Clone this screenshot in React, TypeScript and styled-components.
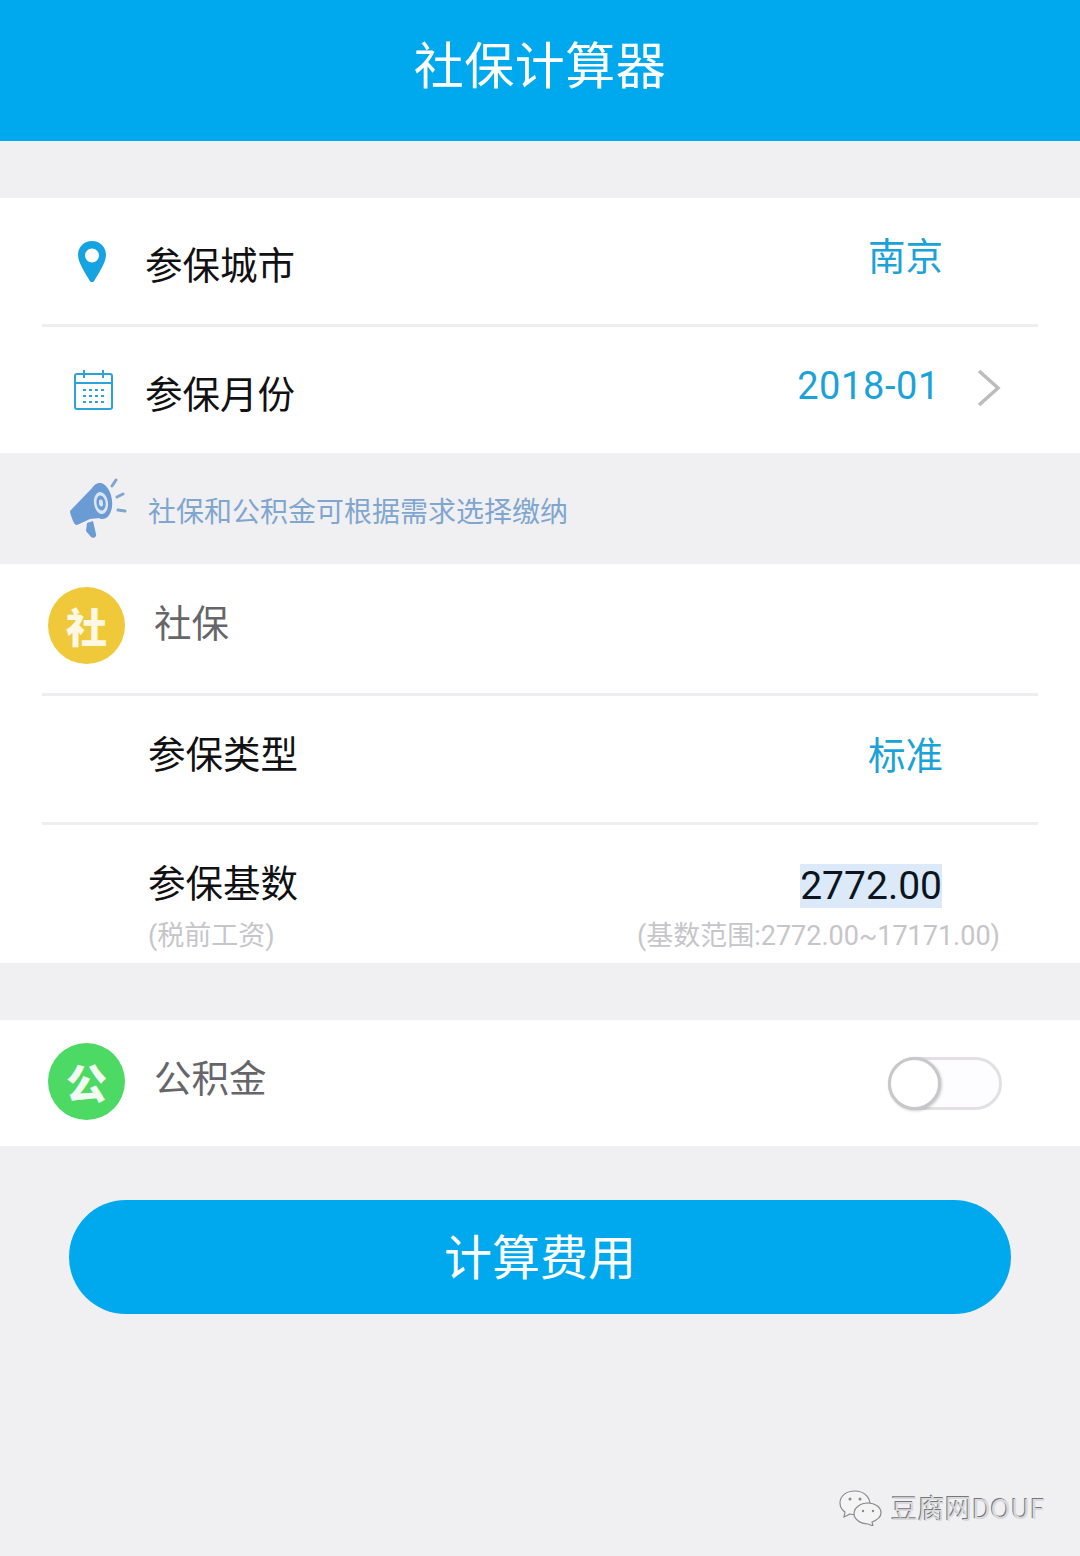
import styled, { createGlobalStyle } from 'styled-components';

const GlobalStyle = createGlobalStyle`
  html, body {
    margin: 0;
    padding: 0;
    background-color: #f0f0f2;
    font-family: 'Noto Sans CJK SC', 'Noto Sans', sans-serif;
  }
`;

const Page = styled.div`
  width: 1080px;
  height: 1556px;
  overflow: hidden;
  display: flex;
  flex-direction: column;
  background-color: #f0f0f2;
`;

const Header = styled.header`
  height: 141px;
  flex-shrink: 0;
  margin-bottom: 57px;
  display: flex;
  align-items: center;
  justify-content: center;
  background-color: #00a8ee;
  color: #ffffff;
  font-size: 50px;
  letter-spacing: 0.5px;
  padding-bottom: 17px;
  box-sizing: border-box;
`;

const Card = styled.section`
  background-color: #ffffff;
`;

const Row = styled.div<{ $height: number; $shift?: number }>`
  height: ${(props) => props.$height}px;
  margin: 0 42px;
  display: flex;
  align-items: center;
  box-sizing: border-box;
  padding-bottom: ${(props) => props.$shift ?? 0}px;
`;

const Divider = styled.div`
  height: 3px;
  margin: 0 42px;
  background-color: #eeeef0;
`;

const IconSlot = styled.div<{ $pad: number }>`
  width: 103px;
  flex-shrink: 0;
  display: flex;
  align-items: center;
  padding-left: ${(props) => props.$pad}px;
  box-sizing: border-box;
`;

const BadgeSlot = styled.div`
  width: 112px;
  flex-shrink: 0;
  padding-left: 6px;
  box-sizing: border-box;
`;

const Badge = styled.div<{ $color: string; $ink: string }>`
  width: 77px;
  height: 77px;
  border-radius: 50%;
  background-color: ${(props) => props.$color};
  color: ${(props) => props.$ink};
  font-size: 41px;
  font-weight: 900;
  line-height: 77px;
  text-align: center;
`;

const Label = styled.span<{ $indent?: number }>`
  font-size: 37.500px;
  line-height: 50px;
  color: #111114;
  margin-left: ${(props) => props.$indent ?? 0}px;
  padding-top: 4px;
`;

const GroupLabel = styled.span`
  font-size: 37.500px;
  line-height: 50px;
  color: #66666a;
  padding-bottom: 10px;
`;

// $nudge is a margin on a centred flex item, so the text moves by half of it
const Value = styled.span<{ $right: number; $nudge?: number }>`
  margin-left: auto;
  margin-right: ${(props) => props.$right}px;
  margin-top: ${(props) => props.$nudge ?? 0}px;
  font-size: 37.500px;
  line-height: 50px;
  color: #1ba2d8;
`;

const DateValue = styled(Value)`
  font-family: Roboto, sans-serif;
  font-size: 38px;
  letter-spacing: 0.6px;
`;

const Chevron = styled.svg`
  flex-shrink: 0;
  margin: -4px 37px 0 0;
  width: 24px;
  height: 38px;
`;

const Notice = styled.div`
  height: 111px;
  display: flex;
  align-items: center;
  padding-left: 69px;
  box-sizing: border-box;
`;

const NoticeText = styled.span`
  margin-left: 21px;
  padding-top: 2px;
  font-size: 28px;
  color: #7fa6cf;
`;

const BaseRow = styled.div`
  height: 138px;
  margin: 0 42px;
  padding: 27px 38px 0 106px;
  box-sizing: border-box;
  display: grid;
  grid-template-columns: 1fr auto;
  align-content: start;
  justify-items: start;
`;

const BaseValue = styled.span`
  justify-self: end;
  font-family: Roboto, sans-serif;
  font-size: 39px;
  line-height: 44px;
  margin-top: 12px;
  margin-right: 58px;
  color: #0c1420;
  background-color: #dbe9f8;
`;

const Hint = styled.span`
  font-family: Roboto, 'Noto Sans CJK SC', sans-serif;
  font-size: 27px;
  line-height: 40px;
  color: #c6c6ca;
  margin-top: 8px;
`;

const HintRight = styled(Hint)`
  justify-self: end;
`;

const SpacedCard = styled(Card)`
  margin-top: 57px;
`;

const Toggle = styled.div`
  margin: 4px 36px 0 auto;
  width: 114px;
  height: 53px;
  border-radius: 27px;
  border: 3px solid #e2e0e4;
  box-sizing: border-box;
  background-color: #fdfcfe;
  display: flex;
`;

const Knob = styled.div`
  margin: -3px;
  width: 53px;
  height: 53px;
  flex-shrink: 0;
  border-radius: 50%;
  box-sizing: border-box;
  border: 3px solid #c8c8ca;
  background-color: #ffffff;
  box-shadow: 1px 1px 3px rgba(0, 0, 0, 0.2);
`;

const SubmitButton = styled.button`
  display: block;
  flex-shrink: 0;
  width: 942px;
  height: 114px;
  margin: 54px auto 0;
  padding: 0 0 7px;
  border: none;
  border-radius: 57px;
  background-color: #00a8ee;
  color: #ffffff;
  font-family: inherit;
  font-size: 48px;
`;

const Watermark = styled.div`
  margin: auto 35px 28px 0;
  align-self: flex-end;
  display: flex;
  align-items: center;
  gap: 8px;
  font-size: 27px;
  line-height: 40px;
  color: #d9d9db;
  text-shadow: -1px -1px 0 #77777a;
`;

const PinIcon = () => (
  <svg width="28" height="41" viewBox="0 0 28 41">
    <path
      fillRule="evenodd"
      fill="#16a3e2"
      d="M14 0C6 0 0 6 0 14c0 8 8 19 11.500 25.500c1 2 4 2 5 0C20 33 28 22 28 14 28 6 22 0 14 0zm0 7.500a7 7 0 1 1 0 14 7 7 0 0 1 0-14z"
    />
  </svg>
);

const CalendarIcon = () => (
  <svg width="39" height="40" viewBox="0 0 39 40" fill="none" stroke="#2ba3d6" strokeWidth="2">
    <rect x="1" y="4" width="37" height="35" rx="2" />
    <path d="M1 13h37M10 0v8M29 0v8" />
    <path strokeWidth="2" strokeDasharray="3 3" d="M9 20h22M9 26h22M9 32h22" />
  </svg>
);

const HornIcon = () => (
  <svg width="58" height="62" viewBox="0 0 58 62">
    <path fill="#6b9bd4" d="M1 33L26 7c2-2 5-2 8-1l5 32c-2 2-5 3-8 2l-10 1-13 6c-2 0-3-2-4-4-1-3-3-7-3-10z" />
    <ellipse cx="32" cy="23" rx="11" ry="18" fill="#6b9bd4" transform="rotate(-8 32 23)" />
    <ellipse cx="32" cy="25" rx="7" ry="11" fill="#dbe5f1" transform="rotate(-8 32 25)" />
    <ellipse cx="32" cy="25" rx="4.500" ry="7.500" fill="#6b9bd4" transform="rotate(-8 32 25)" />
    <ellipse cx="32" cy="25" rx="2" ry="3.500" fill="#dbe5f1" transform="rotate(-8 32 25)" />
    <path fill="#6b9bd4" d="M18 45l6-2 3 13c1 3-3 5-5 3l-5-6z" />
    <path stroke="#7fa6cf" strokeWidth="3" strokeLinecap="round" fill="none" d="M43 8l4-6M48 19l6-3M49 32l7 1" />
  </svg>
);

const WeChatIcon = () => (
  <svg width="44" height="36" viewBox="0 0 44 36" fill="#f4f4f5" stroke="#8a8a8c" strokeWidth="1.200">
    <path d="M16 1C7 1 1 6 1 13c0 4 2 7 5 9l-1 5 6-3c2 .5 4 .7 6 .5C15 19 22 13 31 13 30 6 24 1 16 1z" />
    <path d="M29 13c-8 0-14 5-14 10.500S21 34 29 34l5 2-1-4c5-2 9-5 9-9 0-6-6-10-13-10z" />
    <circle cx="11" cy="9" r="1.500" fill="#8a8a8c" stroke="none" />
    <circle cx="21" cy="9" r="1.500" fill="#8a8a8c" stroke="none" />
    <circle cx="24" cy="21" r="1.200" fill="#8a8a8c" stroke="none" />
    <circle cx="34" cy="21" r="1.200" fill="#8a8a8c" stroke="none" />
  </svg>
);

const App = () => {
  return (
    <Page>
      <GlobalStyle />
      <Header>社保计算器</Header>

      <Card>
        <Row $height={126}>
          <IconSlot $pad={36}>
            <PinIcon />
          </IconSlot>
          <Label>参保城市</Label>
          <Value $right={95} $nudge={-14}>南京</Value>
        </Row>
        <Divider />
        <Row $height={126}>
          <IconSlot $pad={32}>
            <CalendarIcon />
          </IconSlot>
          <Label>参保月份</Label>
          <DateValue $right={37} $nudge={-8}>2018-01</DateValue>
          <Chevron viewBox="0 0 24 38" fill="none" stroke="#bcbcbe" strokeWidth="3.500">
            <path d="M2 2l19 17L2 36" />
          </Chevron>
        </Row>
      </Card>

      <Notice>
        <HornIcon />
        <NoticeText>社保和公积金可根据需求选择缴纳</NoticeText>
      </Notice>

      <Card>
        <Row $height={129} $shift={6}>
          <BadgeSlot>
            <Badge $color="#f0c93a" $ink="#fdf8e4">社</Badge>
          </BadgeSlot>
          <GroupLabel>社保</GroupLabel>
        </Row>
        <Divider />
        <Row $height={126} $shift={18}>
          <Label $indent={106}>参保类型</Label>
          <Value $right={95} $nudge={6}>标准</Value>
        </Row>
        <Divider />
        <BaseRow>
          <Label>参保基数</Label>
          <BaseValue>2772.00</BaseValue>
          <Hint>(税前工资)</Hint>
          <HintRight>(基数范围:2772.00~17171.00)</HintRight>
        </BaseRow>
      </Card>

      <SpacedCard>
        <Row $height={126} $shift={4}>
          <BadgeSlot>
            <Badge $color="#4cd964" $ink="#f2fbf2">公</Badge>
          </BadgeSlot>
          <GroupLabel>公积金</GroupLabel>
          <Toggle>
            <Knob />
          </Toggle>
        </Row>
      </SpacedCard>

      <SubmitButton>计算费用</SubmitButton>

      <Watermark>
        <WeChatIcon />
        <span>豆腐网DOUF</span>
      </Watermark>
    </Page>
  );
};

export default App;
